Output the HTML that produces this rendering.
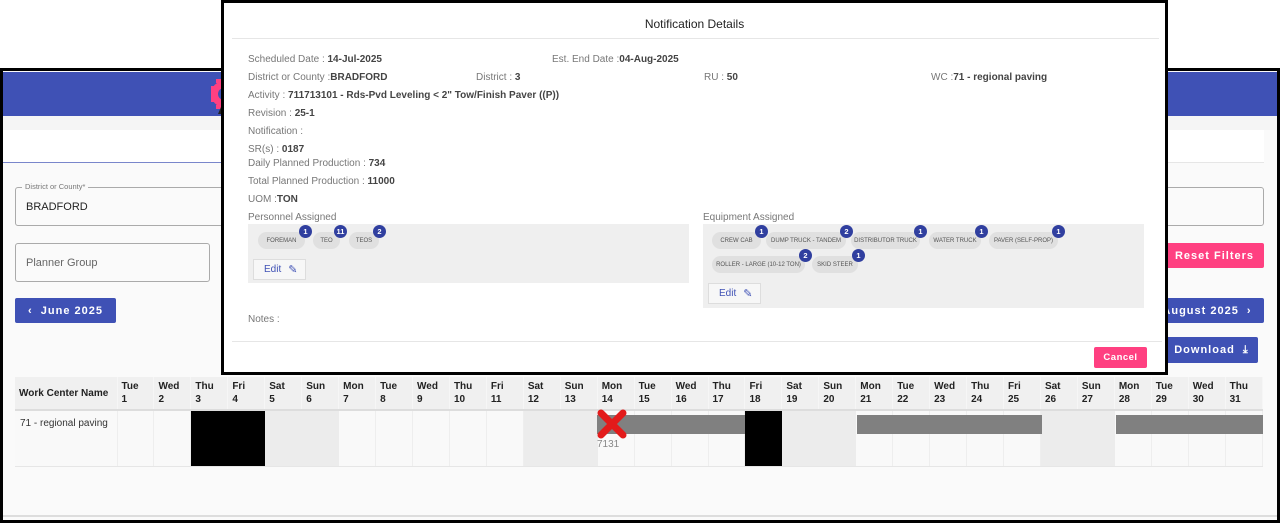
<!DOCTYPE html>
<html><head><meta charset="utf-8">
<style>
*{box-sizing:border-box;margin:0;padding:0}
body{width:1280px;height:523px;overflow:hidden;background:#fff;font-family:"Liberation Sans",sans-serif;position:relative}
.a{position:absolute}
.frame{left:0;top:68px;width:1280px;height:455px;border:3px solid #000;background:#fafafa}
.hdr{left:3px;top:72px;width:1274px;height:44px;background:#3f51b5}
.btn{position:absolute;color:#fff;font-weight:bold;font-size:11px;letter-spacing:1px;border-radius:2px;display:flex;align-items:center;justify-content:center}
table{border-collapse:collapse;table-layout:fixed;position:absolute;left:15px;top:377px;width:1248px;font-family:"Liberation Sans",sans-serif}
th{background:#f0f0f0;font-size:10px;font-weight:bold;color:#222;text-align:left;padding:3px 4px;height:33px;border-right:1px solid #f6f6f6;border-bottom:2px solid #ddd;line-height:13px;vertical-align:top}
td{height:56px;background:#f9f9f9;border-right:1px solid #eee;border-bottom:1px solid #e6e6e6;font-size:10px;vertical-align:top;padding:7px 5px;color:#333}
td.k{background:#000;border-right-color:#000}td.g{background:#ececec;border-right-color:#ececec}
.modal{left:221px;top:0;width:947px;height:375px;border:3px solid #000;background:#fff}
.lb{position:absolute;font-size:10px;color:#777;white-space:nowrap}
.lb b{color:#444}
.box{position:absolute;background:#efefef}
.chip{position:absolute;height:17px;border-radius:9px;background:#e0e0e0;font-size:6px;color:#555;display:flex;align-items:center;justify-content:center;white-space:nowrap}
.bd{position:absolute;width:13px;height:13px;border-radius:50%;background:#303f9f;color:#fff;font-size:7.5px;font-weight:bold;display:flex;align-items:center;justify-content:center;top:-7px;right:-7px}
.edit{position:absolute;height:21px;width:53px;border:1px solid #ddd;background:#f7f7f7;color:#3f51b5;font-size:10px;display:flex;align-items:center;padding-left:10px;gap:7px}
</style></head><body>
<div class="a frame"></div>
<div class="a hdr"></div>
<svg class="a" style="left:202px;top:74px" width="24" height="40" viewBox="0 0 24 40"><circle cx="22" cy="20" r="13" fill="#ff4081"/><path d="M9 12h4v16H9z M14 5h5v4h-5z M14 31h5v4h-5z" fill="#ff4081"/><circle cx="22" cy="20" r="6" fill="#3f51b5"/><path d="M16 40 L22 26 L24 26 L24 40z" fill="#222"/></svg>
<div class="a" style="left:3px;top:116px;width:1274px;height:14px;background:#f5f5f5"></div>
<div class="a" style="left:3px;top:130px;width:1261px;height:32px;background:#fff"></div>
<div class="a" style="left:3px;top:162px;width:220px;height:1px;background:#7986cb"></div>
<div class="a" style="left:223px;top:162px;width:1041px;height:1px;background:#e6e6e6"></div>
<div class="a" style="left:15px;top:187px;width:210px;height:39px;border:1px solid #aaa;border-radius:3px;background:#fafafa"></div>
<div class="a" style="left:22px;top:182px;background:#fafafa;padding:0 3px;font-size:7.5px;color:#777">District or County*</div>
<div class="a" style="left:26px;top:201px;font-size:11px;color:#222">BRADFORD</div>
<div class="a" style="left:15px;top:243px;width:195px;height:39px;border:1px solid #aaa;border-radius:3px"></div>
<div class="a" style="left:26px;top:257px;font-size:11px;color:#666">Planner Group</div>
<div class="btn" style="left:15px;top:298px;width:101px;height:25px;background:#3f51b5">‹&nbsp;&nbsp;June 2025</div>
<div class="a" style="left:1165px;top:187px;width:99px;height:39px;border:1px solid #aaa;border-radius:3px"></div>
<div class="btn" style="left:1165px;top:243px;width:99px;height:25px;background:#ff4081">Reset Filters</div>
<div class="btn" style="left:1150px;top:298px;width:114px;height:25px;background:#3f51b5">August 2025&nbsp;&nbsp;›</div>
<div class="btn" style="left:1165px;top:337px;width:93px;height:26px;background:#3f51b5">Download&nbsp;&nbsp;⤓</div>

<table>
<colgroup><col style="width:102px"></colgroup>
<tr><th style="vertical-align:middle">Work Center Name</th>
<th>Tue<br>1</th><th>Wed<br>2</th><th>Thu<br>3</th><th>Fri<br>4</th><th>Sat<br>5</th><th>Sun<br>6</th><th>Mon<br>7</th><th>Tue<br>8</th><th>Wed<br>9</th><th>Thu<br>10</th><th>Fri<br>11</th><th>Sat<br>12</th><th>Sun<br>13</th><th>Mon<br>14</th><th>Tue<br>15</th><th>Wed<br>16</th><th>Thu<br>17</th><th>Fri<br>18</th><th>Sat<br>19</th><th>Sun<br>20</th><th>Mon<br>21</th><th>Tue<br>22</th><th>Wed<br>23</th><th>Thu<br>24</th><th>Fri<br>25</th><th>Sat<br>26</th><th>Sun<br>27</th><th>Mon<br>28</th><th>Tue<br>29</th><th>Wed<br>30</th><th>Thu<br>31</th></tr>
<tr><td>71 - regional paving</td><td></td><td></td><td class="k"></td><td class="k"></td><td class="g"></td><td class="g"></td><td></td><td></td><td></td><td></td><td></td><td class="g"></td><td class="g"></td><td></td><td></td><td></td><td></td><td class="k"></td><td class="g"></td><td class="g"></td><td></td><td></td><td></td><td></td><td></td><td class="g"></td><td class="g"></td><td></td><td></td><td></td><td></td></tr>
</table>
<div class="a" style="left:597px;top:415px;width:148px;height:19px;background:#808080"></div>
<div class="a" style="left:857px;top:415px;width:185px;height:19px;background:#808080"></div>
<div class="a" style="left:1116px;top:415px;width:147px;height:19px;background:#808080"></div>
<svg class="a" style="left:596px;top:409px" width="32" height="30"><path d="M5 4L27 26M27 4L5 26" stroke="#e31b1b" stroke-width="7" stroke-linecap="round"/></svg>
<div class="a" style="left:597px;top:439px;font-size:10px;color:#888">7131</div>
<div class="a" style="left:3px;top:515px;width:1274px;height:2px;background:#ddd"></div>

<div class="a modal">
<div class="a" style="left:0;width:941px;top:14px;text-align:center;font-size:12px;color:#222">Notification Details</div>
<div class="a" style="left:8px;top:35px;width:927px;height:1px;background:#e6e6e6"></div>
<div class="lb" style="left:24px;top:51px">Scheduled Date : <b>14-Jul-2025</b></div>
<div class="lb" style="left:328px;top:51px">Est. End Date :<b>04-Aug-2025</b></div>
<div class="lb" style="left:24px;top:69px">District or County :<b>BRADFORD</b></div>
<div class="lb" style="left:252px;top:69px">District : <b>3</b></div>
<div class="lb" style="left:480px;top:69px">RU : <b>50</b></div>
<div class="lb" style="left:707px;top:69px">WC :<b>71 - regional paving</b></div>
<div class="lb" style="left:24px;top:87px">Activity : <b>711713101 - Rds-Pvd Leveling &lt; 2" Tow/Finish Paver ((P))</b></div>
<div class="lb" style="left:24px;top:105px">Revision : <b>25-1</b></div>
<div class="lb" style="left:24px;top:123px">Notification :</div>
<div class="lb" style="left:24px;top:141px">SR(s) : <b>0187</b></div>
<div class="lb" style="left:24px;top:155px">Daily Planned Production : <b>734</b></div>
<div class="lb" style="left:24px;top:173px">Total Planned Production : <b>11000</b></div>
<div class="lb" style="left:24px;top:191px">UOM :<b>TON</b></div>
<div class="lb" style="left:24px;top:209px">Personnel Assigned</div>
<div class="lb" style="left:479px;top:209px">Equipment Assigned</div>
<div class="box" style="left:24px;top:221px;width:441px;height:59px">
 <div class="chip" style="left:10px;top:8px;width:47px">FOREMAN<div class="bd">1</div></div>
 <div class="chip" style="left:65px;top:8px;width:27px">TEO<div class="bd">11</div></div>
 <div class="chip" style="left:101px;top:8px;width:30px">TEOS<div class="bd">2</div></div>
 <div class="edit" style="left:5px;top:35px">Edit <span style="font-size:11px">✎</span></div>
</div>
<div class="box" style="left:479px;top:221px;width:441px;height:84px">
 <div class="chip" style="left:9px;top:8px;width:49px">CREW CAB<div class="bd">1</div></div>
 <div class="chip" style="left:63px;top:8px;width:80px">DUMP TRUCK - TANDEM<div class="bd">2</div></div>
 <div class="chip" style="left:148px;top:8px;width:69px">DISTRIBUTOR TRUCK<div class="bd">1</div></div>
 <div class="chip" style="left:226px;top:8px;width:52px">WATER TRUCK<div class="bd">1</div></div>
 <div class="chip" style="left:286px;top:8px;width:69px">PAVER (SELF-PROP)<div class="bd">1</div></div>
 <div class="chip" style="left:9px;top:32px;width:93px">ROLLER - LARGE (10-12 TON)<div class="bd">2</div></div>
 <div class="chip" style="left:109px;top:32px;width:46px">SKID STEER<div class="bd">1</div></div>
 <div class="edit" style="left:5px;top:59px">Edit <span style="font-size:11px">✎</span></div>
</div>
<div class="lb" style="left:24px;top:311px">Notes :</div>
<div class="a" style="left:8px;top:338px;width:930px;height:1px;background:#e6e6e6"></div>
<div class="btn" style="left:870px;top:344px;width:53px;height:21px;background:#ff4081;font-size:9.5px;letter-spacing:0.5px">Cancel</div>
</div>
</body></html>
